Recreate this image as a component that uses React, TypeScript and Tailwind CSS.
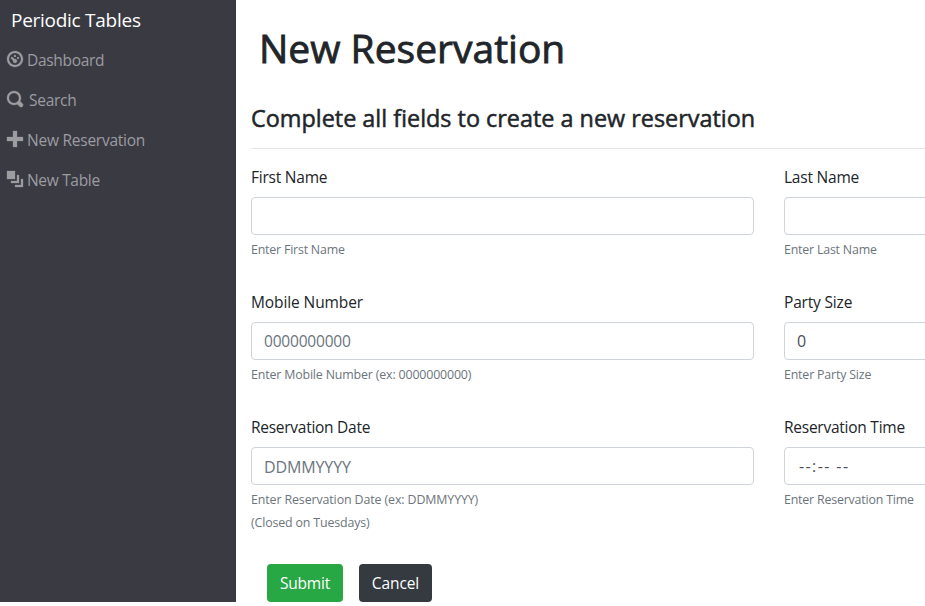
import type { ReactNode } from "react";

const icons = {
  dashboard:
    "M4 0c-2.2 0-4 1.8-4 4s1.8 4 4 4 4-1.8 4-4-1.8-4-4-4zm0 1c1.66 0 3 1.34 3 3s-1.34 3-3 3-3-1.34-3-3 1.34-3 3-3zm0 1c-.28 0-.5.22-.5.5s.22.5.5.5.5-.22.5-.5-.22-.5-.5-.5zm-1.66 1a.5.5 0 0 0-.19.84l.91.91c-.02.08-.06.16-.06.25 0 .55.45 1 1 1s1-.45 1-1-.45-1-1-1c-.09 0-.17.04-.25.06l-.91-.91a.5.5 0 0 0-.44-.16.5.5 0 0 0-.06 0zm3.16 0c-.28 0-.5.22-.5.5s.22.5.5.5.5-.22.5-.5-.22-.5-.5-.5z",
  search:
    "M3.5 0c-1.93 0-3.5 1.57-3.5 3.5s1.57 3.5 3.5 3.5c.59 0 1.17-.14 1.66-.41a1 1 0 0 0 .13.13l1 1a1.02 1.02 0 1 0 1.44-1.44l-1-1a1 1 0 0 0-.16-.13c.27-.49.44-1.06.44-1.66 0-1.93-1.55-3.5-3.5-3.5zm0 1c1.39 0 2.5 1.11 2.5 2.5 0 .66-.24 1.27-.66 1.72-.01.01-.02.02-.03.03a1 1 0 0 0-.13.13c-.44.4-1.04.63-1.69.63-1.39 0-2.5-1.11-2.5-2.5s1.11-2.5 2.5-2.5z",
  plus: "M3 0v3h-3v2h3v3h2v-3h3v-2h-3v-3h-2z",
  layers: "M0 0v4h4v-4h-4zm5 2v3h-3v1h4v-4h-1zm2 2v3h-3v1h4v-4h-1z",
};

function NavItem({ icon, label, className }: { icon: keyof typeof icons; label: string; className: string }) {
  return (
    <a href="#" className="flex h-10 items-center text-[#9c9ca1]">
      <svg viewBox="0 0 8 8" className="mb-0.5 size-4 shrink-0 overflow-visible fill-current stroke-current stroke-[0.14]">
        <path d={icons[icon]} />
      </svg>
      <span className={`pt-0.5 text-[15.5px] ${className}`}>{label}</span>
    </a>
  );
}

type FieldProps = {
  label: string;
  labelClass: string;
  hints: { text: string; className: string }[];
  children?: ReactNode;
};

function Field({ label, labelClass, hints, children }: FieldProps) {
  return (
    <div className="w-[503px] shrink-0">
      <label className={`mb-2 block h-6 text-[15.5px] leading-6 ${labelClass}`}>{label}</label>
      <div className="flex h-[38px] items-center rounded border border-[#ced4da] px-3 text-[#495057]">{children}</div>
      <div className="mt-[3px] text-[12.4px] text-[#6c757d]">
        {hints.map((hint) => (
          <p key={hint.text} className={`h-[23px] leading-[23px] ${hint.className}`}>
            {hint.text}
          </p>
        ))}
      </div>
    </div>
  );
}

export default function App() {
  return (
    <div className="flex h-[606px] w-full items-start overflow-hidden bg-white font-['Open_Sans','Noto_Sans',sans-serif] text-base text-[#212529]">
      <nav className="h-[602px] w-[236px] shrink-0 bg-[#3a3a43] pl-[7px]">
        <div className="h-10 pl-1 text-[19px] leading-10 tracking-[-0.27px] text-white">Periodic Tables</div>
        <NavItem icon="dashboard" label="Dashboard" className="ml-1 tracking-[-0.32px]" />
        <NavItem icon="search" label="Search" className="ml-1.5 tracking-[-0.28px]" />
        <NavItem icon="plus" label="New Reservation" className="ml-1 tracking-[-0.24px]" />
        <NavItem icon="layers" label="New Table" className="ml-1 tracking-[-0.32px]" />
      </nav>
      <main className="min-w-0 flex-1 pl-[15px]">
        <h1 className="mt-6 h-12 pl-2 text-[39px] leading-12 font-normal whitespace-nowrap [-webkit-text-stroke:0.8px_#212529]">
          New Reservation
        </h1>
        <h2 className="mt-8 mb-[15px] h-[29px] text-[23.4px] leading-[29px] font-normal whitespace-nowrap [-webkit-text-stroke:0.5px_#212529]">
          Complete all fields to create a new reservation
        </h2>
        <hr className="border-[#e5e5e5]" />
        <form className="mt-4">
          <div className="flex h-[125px] gap-[30px]">
            <Field
              label="First Name"
              labelClass="tracking-[-0.22px]"
              hints={[{ text: "Enter First Name", className: "tracking-[-0.2px]" }]}
            />
            <Field
              label="Last Name"
              labelClass="tracking-[-0.22px]"
              hints={[{ text: "Enter Last Name", className: "tracking-[-0.2px]" }]}
            />
          </div>
          <div className="flex h-[125px] gap-[30px]">
            <Field
              label="Mobile Number"
              labelClass="tracking-[-0.1px]"
              hints={[{ text: "Enter Mobile Number (ex: 0000000000)", className: "tracking-[-0.16px]" }]}
            >
              <span className="pt-0.5 text-[15.5px] tracking-[-0.2px] text-[#6c757d]">0000000000</span>
            </Field>
            <Field
              label="Party Size"
              labelClass="tracking-[-0.18px]"
              hints={[{ text: "Enter Party Size", className: "tracking-[-0.18px]" }]}
            >
              <span>0</span>
            </Field>
          </div>
          <div className="flex h-[149px] gap-[30px]">
            <Field
              label="Reservation Date"
              labelClass="tracking-[-0.27px]"
              hints={[
                { text: "Enter Reservation Date (ex: DDMMYYYY)", className: "tracking-[-0.11px]" },
                { text: "(Closed on Tuesdays)", className: "tracking-[-0.15px]" },
              ]}
            >
              <span className="pt-0.5 tracking-[-0.12px] text-[#6c757d]">DDMMYYYY</span>
            </Field>
            <Field
              label="Reservation Time"
              labelClass="tracking-[-0.25px]"
              hints={[{ text: "Enter Reservation Time", className: "tracking-[-0.19px]" }]}
            >
              <span className="pl-0.5 tracking-[1.4px]">--:-- --</span>
            </Field>
          </div>
          <div className="flex gap-4 pl-4 text-[15.5px] text-white">
            <button type="button" className="h-[38px] w-[76px] rounded bg-[#28a745] pt-0.5 tracking-[-0.2px]">
              Submit
            </button>
            <button type="button" className="h-[38px] w-[73px] rounded bg-[#343a40] pt-0.5 tracking-[-0.1px]">
              Cancel
            </button>
          </div>
        </form>
      </main>
    </div>
  );
}
